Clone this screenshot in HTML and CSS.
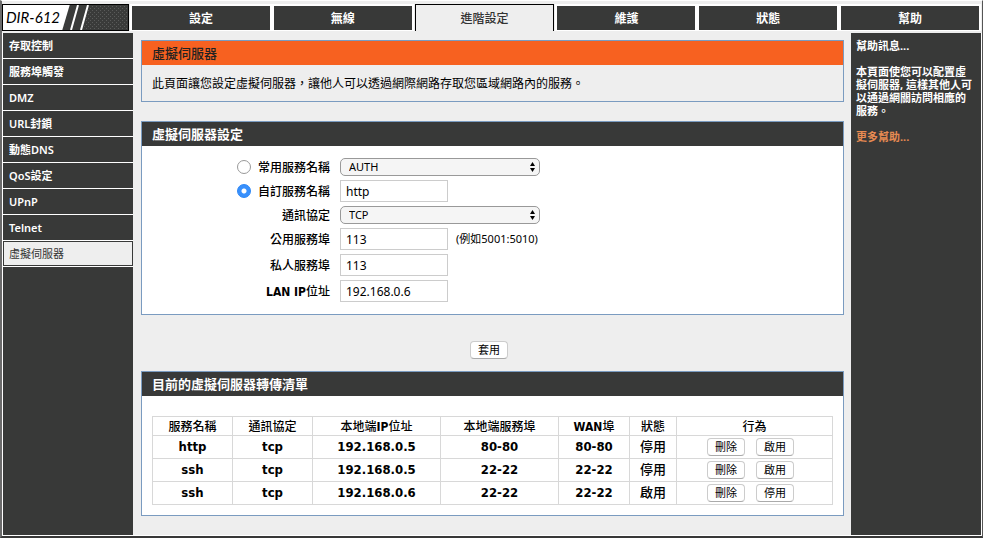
FILE: index.html
```html
<!DOCTYPE html>
<html lang="zh-Hant">
<head>
<meta charset="utf-8">
<meta name="viewport" content="width=device-width, initial-scale=1">
<title>DIR-612</title>
<link rel="stylesheet" href="styles.css">
</head>
<body>
<div class="frame">
  <header class="top">
    <svg class="logo" viewBox="0 0 127 27" role="img" aria-label="DIR-612">
      <defs>
        <pattern id="mesh" width="4" height="4" patternUnits="userSpaceOnUse">
          <rect width="4" height="4" fill="#3a3b3a"/>
          <path d="M0 0h1v1h-1zM2 2h1v1h-1z" fill="#5a5b5a"/>
        </pattern>
      </defs>
      <rect width="127" height="27" fill="url(#mesh)"/>
      <path d="M60 0H88L80 27H58z" fill="#3a3b3a"/>
      <path d="M0 0H68L60 27H0z" fill="#fff"/>
      <path d="M76 1L69 26M86 1L79 26" stroke="#fff" stroke-width="2"/>
      <rect x="0.5" y="0.5" width="126" height="26" fill="none" stroke="#000"/>
      <text x="4" y="19" class="logo-text">DIR-612</text>
    </svg>
    <nav class="tabs">
      <a href="#">設定</a>
      <a href="#">無線</a>
      <a href="#" class="current">進階設定</a>
      <a href="#">維護</a>
      <a href="#">狀態</a>
      <a href="#">幫助</a>
    </nav>
  </header>
  <div class="body">
    <nav class="side">
      <a href="#">存取控制</a>
      <a href="#">服務埠觸發</a>
      <a href="#">DMZ</a>
      <a href="#">URL封鎖</a>
      <a href="#">動態DNS</a>
      <a href="#">QoS設定</a>
      <a href="#">UPnP</a>
      <a href="#">Telnet</a>
      <a href="#" class="current">虛擬伺服器</a>
    </nav>
    <main class="content">
      <section class="panel intro">
        <h1>虛擬伺服器</h1>
        <p>此頁面讓您設定虛擬伺服器，讓他人可以透過網際網路存取您區域網路內的服務。</p>
      </section>
      <form>
        <section class="panel">
          <h2>虛擬伺服器設定</h2>
          <div class="fields">
            <div class="row">
              <div class="name"><input type="radio" name="kind" id="common"><label for="common">常用服務名稱</label></div>
              <div class="pick">
                <select aria-label="常用服務名稱"><option>AUTH</option></select>
                <svg viewBox="0 0 5 10"><path d="M0 4L2.500 0L5 4zM0 6L2.500 10L5 6z"/></svg>
              </div>
            </div>
            <div class="row">
              <div class="name"><input type="radio" name="kind" id="custom" checked><label for="custom">自訂服務名稱</label></div>
              <input type="text" aria-label="自訂服務名稱" value="http">
            </div>
            <div class="row">
              <div class="name"><label for="proto">通訊協定</label></div>
              <div class="pick">
                <select id="proto"><option>TCP</option></select>
                <svg viewBox="0 0 5 10"><path d="M0 4L2.500 0L5 4zM0 6L2.500 10L5 6z"/></svg>
              </div>
            </div>
            <div class="row">
              <div class="name"><label for="public">公用服務埠</label></div>
              <input type="text" id="public" value="113">
              <span class="hint">(例如5001:5010)</span>
            </div>
            <div class="row">
              <div class="name"><label for="private">私人服務埠</label></div>
              <input type="text" id="private" value="113">
            </div>
            <div class="row">
              <div class="name"><label for="lan"><b>LAN IP</b>位址</label></div>
              <input type="text" id="lan" value="192.168.0.6">
            </div>
          </div>
        </section>
        <div class="apply"><button type="button">套用</button></div>
      </form>
      <section class="panel">
        <h2>目前的虛擬伺服器轉傳清單</h2>
        <div class="list">
          <table>
            <colgroup><col class="c1"><col class="c1"><col class="c2"><col class="c3"><col class="c4"><col class="c5"><col class="c6"></colgroup>
            <thead>
              <tr><th>服務名稱</th><th>通訊協定</th><th>本地端<b>IP</b>位址</th><th>本地端服務埠</th><th><b>WAN</b>埠</th><th>狀態</th><th>行為</th></tr>
            </thead>
            <tbody>
              <tr><td>http</td><td>tcp</td><td>192.168.0.5</td><td>80-80</td><td>80-80</td><td class="state">停用</td><td><div class="acts"><button type="button">刪除</button><button type="button">啟用</button></div></td></tr>
              <tr><td>ssh</td><td>tcp</td><td>192.168.0.5</td><td>22-22</td><td>22-22</td><td class="state">停用</td><td><div class="acts"><button type="button">刪除</button><button type="button">啟用</button></div></td></tr>
              <tr><td>ssh</td><td>tcp</td><td>192.168.0.6</td><td>22-22</td><td>22-22</td><td class="state">啟用</td><td><div class="acts"><button type="button">刪除</button><button type="button">停用</button></div></td></tr>
            </tbody>
          </table>
        </div>
      </section>
    </main>
    <aside class="help">
      <p>幫助訊息...</p>
      <p>本頁面使您可以配置虛擬伺服器, 這樣其他人可以通過網關訪問相應的服務。</p>
      <p><a href="#">更多幫助...</a></p>
    </aside>
  </div>
</div>
</body>
</html>
```

FILE: styles.css
```css
* {
  box-sizing: border-box;
}

body {
  margin: 0;
  background: #eee;
  color: #000;
  font: 12px/16px "Noto Sans", "Noto Sans CJK TC", sans-serif;
}

a {
  color: inherit;
  text-decoration: none;
}

h1, h2, p {
  margin: 0;
}

.frame {
  display: flex;
  flex-direction: column;
  min-height: 100vh;
  border-left: 2px solid #6b6b6b;
  border-right: 1px solid #555;
  border-bottom: 2px solid #383838;
  border-top: 1px solid #fff;
}

.top {
  display: flex;
  gap: 1px;
  padding: 3px 1px 2px 0;
}

.logo {
  flex: none;
  width: 127px;
  height: 27px;
}

.logo-text {
  font: italic 15px Lato, sans-serif;
}

.tabs {
  display: flex;
  flex: 1;
}

.tabs a {
  display: flex;
  flex: 1 1 0;
  align-items: center;
  justify-content: center;
  padding-top: 2px;
  border: solid #fff;
  border-width: 2px 2px 1px;
  background: #383938;
  color: #fff;
  font-weight: bold;
}

.tabs .current {
  border: solid #000;
  border-width: 1px 1px 0;
  margin: 0 1px;
  background: #eee;
  color: #333;
  font-weight: 500;
}

.body {
  display: grid;
  flex: 1;
  grid-template-columns: 130px 1fr 130px;
  border: solid #fff;
  border-width: 0 1px 1px;
}

.side {
  background: #383938;
  color: #fff;
  font-size: 11px;
  font-weight: 600;
}

.side a {
  display: flex;
  align-items: center;
  height: 26px;
  padding-left: 6px;
  border-bottom: 1px solid #fff;
}

.side .current {
  background: #eee;
  box-shadow: inset 0 0 0 1px #383938;
  color: #333;
  font-weight: normal;
}

.content {
  padding: 7px 7px 19px 8px;
}

.panel {
  border: 1px solid #7a9bc0;
  background: #fff;
}

.panel h1, .panel h2 {
  height: 24px;
  padding-left: 10px;
  background: #383938;
  color: #fff;
  font-size: 13px;
  font-weight: bold;
  line-height: 24px;
}

.intro {
  margin-bottom: 19px;
  background: #eee;
}

.panel h1 {
  background: #f76120;
  color: #222;
  font-weight: 500;
}

.intro p {
  padding: 11px 10px 9px;
}

.fields {
  display: grid;
  gap: 4px;
  padding: 12px 0;
}

.row {
  display: flex;
  align-items: center;
}

.name {
  display: flex;
  flex: none;
  align-items: center;
  justify-content: flex-end;
  gap: 7px;
  width: 188px;
  margin-right: 10px;
}

.name label {
  padding-top: 2px;
  font-weight: 500;
}

b, td {
  font-family: "DejaVu Sans Condensed", "Noto Sans CJK TC", sans-serif;
}

input[type="radio"] {
  width: 14px;
  height: 14px;
  margin: 0;
  border: 1px solid #999;
  border-radius: 50%;
  appearance: none;
  background: #fff;
}

input[type="radio"]:checked {
  border-color: #2a85f5;
  background: radial-gradient(circle, #fff 2px, #3890fc 3px);
}

input[type="text"] {
  width: 108px;
  height: 22px;
  padding: 0 5px;
  border: 1px solid #ccc;
  background: #fff;
  font: inherit;
}

.pick {
  position: relative;
  width: 200px;
}

select {
  display: block;
  width: 100%;
  height: 18px;
  padding: 0 8px;
  border: 1px solid #999;
  border-radius: 5px;
  appearance: none;
  background: #f5f5f5;
  color: #000;
  font: 11px/16px "Noto Sans", "Noto Sans CJK TC", sans-serif;
}

.pick svg {
  position: absolute;
  top: 4px;
  right: 5px;
  width: 5px;
  height: 10px;
  pointer-events: none;
}

.hint {
  margin-left: 8px;
  font-size: 11px;
}

.apply {
  display: flex;
  justify-content: center;
  padding: 26px 7px 12px 0;
}

button {
  width: 38px;
  height: 18px;
  padding: 0;
  border: 1px solid #ccc;
  border-bottom-color: #aaa;
  border-radius: 4px;
  background: #fff;
  color: #000;
  font: 11px/14px "Noto Sans", "Noto Sans CJK TC", sans-serif;
}

.list {
  padding: 20px 10px 10px;
}

table {
  width: 100%;
  border-collapse: collapse;
  table-layout: fixed;
}

.c1 { width: 80px; }
.c2 { width: 128px; }
.c3 { width: 118px; }
.c4 { width: 71px; }
.c5 { width: 47px; }

th, td {
  padding: 0;
  border: 1px solid #d8d8d8;
  text-align: center;
}

th {
  height: 19px;
  padding-top: 2px;
  font-weight: 500;
}

td {
  height: 23px;
  font-size: 13px;
  font-weight: bold;
}

td.state {
  font-weight: 500;
}

.acts {
  display: flex;
  justify-content: center;
  gap: 11px;
  padding-right: 8px;
}

.help {
  padding: 6px 5px;
  background: #383938;
  color: #fff;
  font-size: 11px;
  font-weight: bold;
  line-height: 13px;
}

.help p {
  margin-bottom: 13px;
}

.help a {
  color: #e68a52;
}
```
